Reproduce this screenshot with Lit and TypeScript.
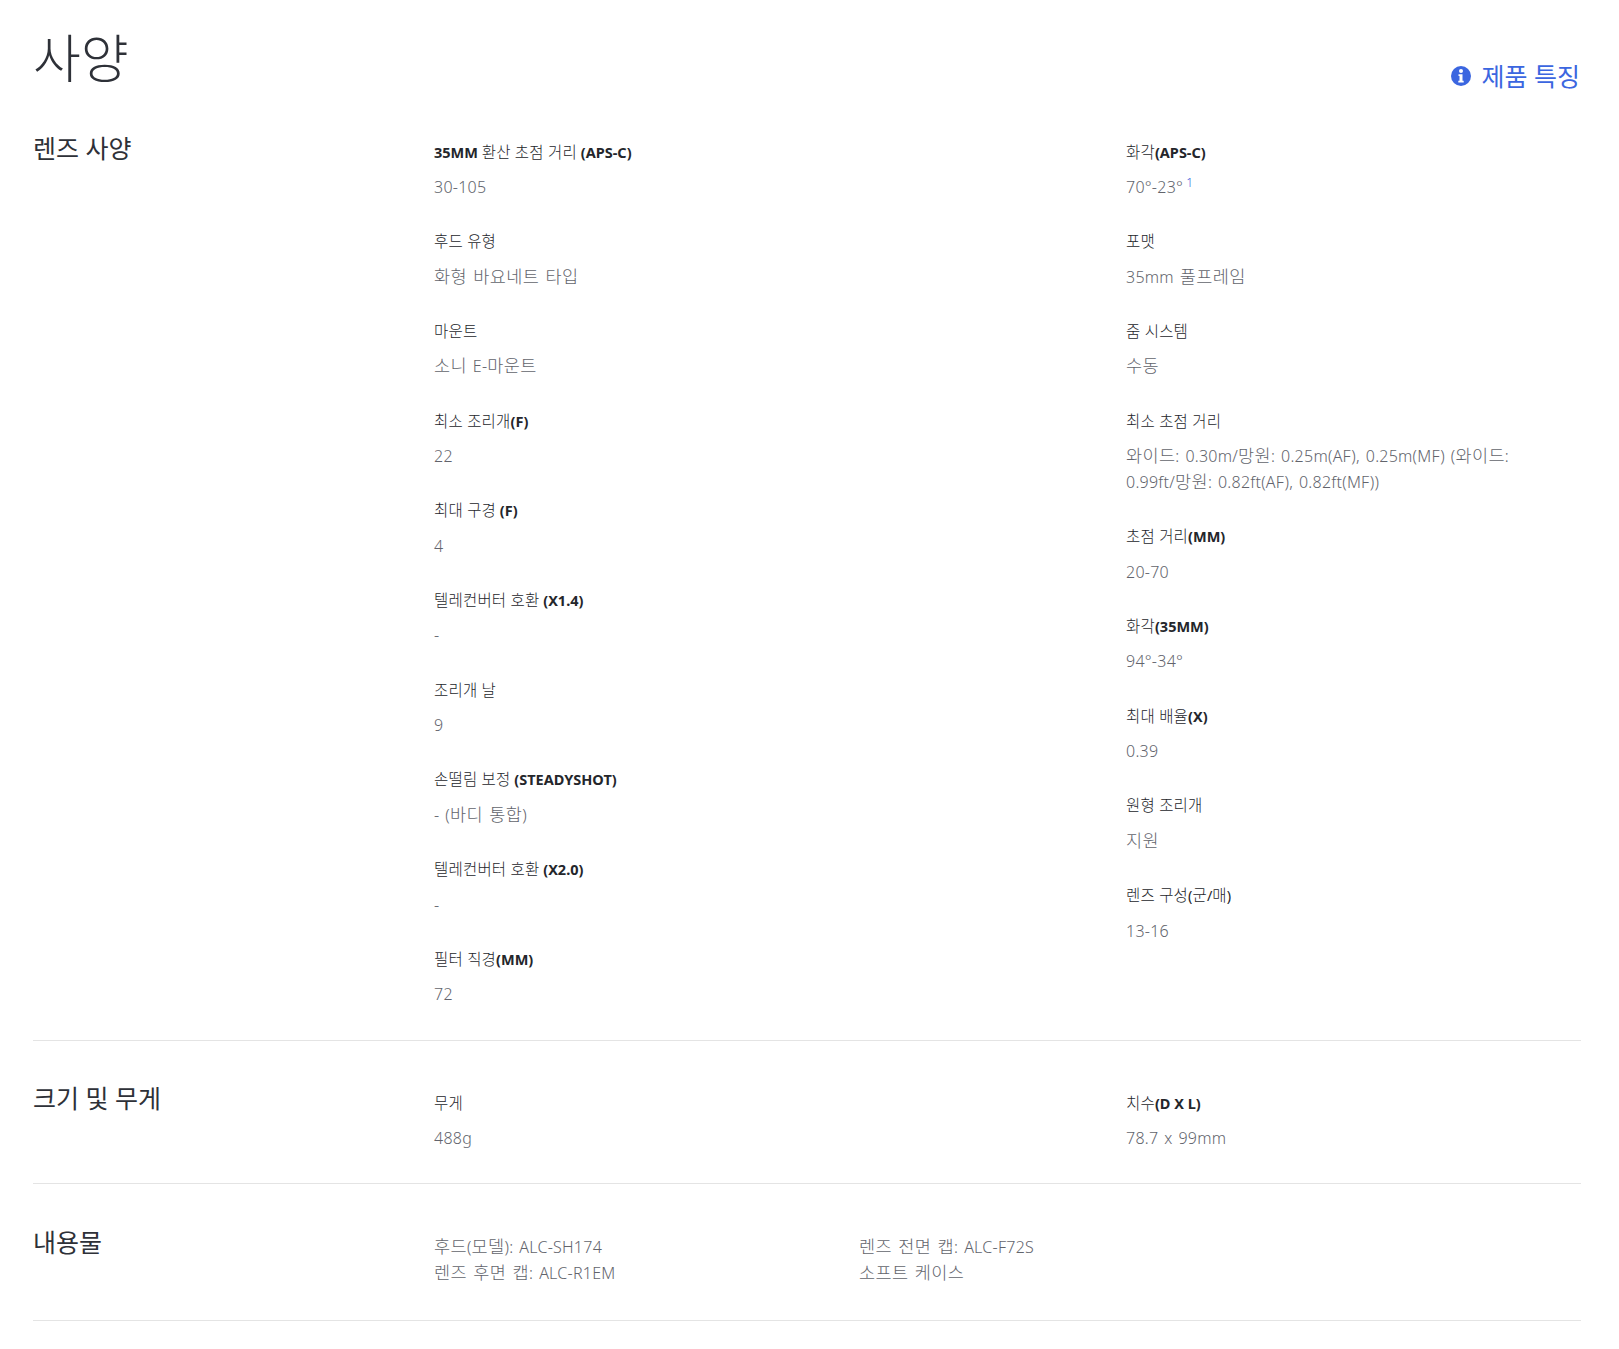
import { LitElement, html, css } from "lit";
import { customElement } from "lit/decorators.js";

type Spec = [string, string];
const left: Spec[] = [
  ["<b>35MM</b> 환산 초점 거리 <b>(APS-C)</b>", "30-105"],
  ["후드 유형", "화형 바요네트 타입"],
  ["마운트", "소니 E-마운트"],
  ["최소 조리개<b>(F)</b>", "22"],
  ["최대 구경 <b>(F)</b>", "4"],
  ["텔레컨버터 호환 <b>(X1.4)</b>", "-"],
  ["조리개 날", "9"],
  ["손떨림 보정 <b>(STEADYSHOT)</b>", "- (바디 통합)"],
  ["텔레컨버터 호환 <b>(X2.0)</b>", "-"],
  ["필터 직경<b>(MM)</b>", "72"],
];
const right: Spec[] = [
  ["화각<b>(APS-C)</b>", "70°-23°"],
  ["포맷", "35mm 풀프레임"],
  ["줌 시스템", "수동"],
  ["최소 초점 거리", "와이드: 0.30m/망원: 0.25m(AF), 0.25m(MF) (와이드: 0.99ft/망원: 0.82ft(AF), 0.82ft(MF))"],
  ["초점 거리<b>(MM)</b>", "20-70"],
  ["화각<b>(35MM)</b>", "94°-34°"],
  ["최대 배율<b>(X)</b>", "0.39"],
  ["원형 조리개", "지원"],
  ["렌즈 구성(군/매)", "13-16"],
];

/* Hangul runs are set larger than the Latin text beside them. */
function ko(s: string) {
  return s
    .split(/([\uAC00-\uD7A3]+(?: [\uAC00-\uD7A3]+)*)/)
    .filter(Boolean)
    .map((p) => (/[\uAC00-\uD7A3]/.test(p) ? html`<span class="k">${p}</span>` : p));
}

function label(s: string) {
  const parts = s.split(/(<b>.*?<\/b>)/).filter(Boolean);
  return parts.map((p) => (p.startsWith("<b>") ? html`<b>${p.slice(3, -4)}</b>` : ko(p)));
}

@customElement("app-root")
export class AppRoot extends LitElement {
  static styles = css`
    :host {
      display: block;
      background: #fff;
      font-family: "Noto Sans", "Noto Sans CJK KR", sans-serif;
      color: #2e3138;
      word-break: keep-all;
    }
    .page { padding: 0 38px 0 33px; }
    .k { line-height: 1; }
    .head {
      display: flex;
      justify-content: space-between;
      align-items: flex-end;
      height: 115px;
      box-sizing: border-box;
    }
    h1 {
      margin: 0;
      font-size: 52px;
      font-weight: 300;
      line-height: 64px;
      padding-bottom: 25px;
      color: #2e3138;
    }
    .feat {
      display: flex;
      align-items: center;
      gap: 10px;
      color: #3b66e0;
      font-size: 25px;
      line-height: 30px;
      padding-bottom: 24px;
      margin-right: 1px;
    }
    .feat svg { width: 20px; height: 20px; display: block; }
    .row {
      display: grid;
      grid-template-columns: 401px 692px 1fr;
      border-bottom: 1px solid #e4e4e4;
      box-sizing: border-box;
    }
    .row.specs { padding-top: 17px; height: 926px; }
    .row.small { padding-top: 41px; height: 143px; }
    .row.box { padding-top: 42px; height: 137px; }
    h2 {
      margin: 0;
      font-size: 25px;
      font-weight: 400;
      line-height: 32px;
      color: #2e3138;
    }
    .col { padding-top: 4px; }
    .small .col { padding-top: 5px; }
    .item { padding-top: 4.5px; margin-bottom: 25.7px; }
    .name {
      font-size: 14.5px;
      line-height: 22px;
      color: #24262b;
      margin-bottom: 11.5px;
    }
    .name .k { font-size: 15.5px; font-weight: 300; letter-spacing: 0.2px; }
    .name b { font-weight: 700; }
    .val, .contents {
      font-size: 16px;
      line-height: 26px;
      color: #62646c;
      font-weight: 300;
      letter-spacing: 0.25px;
      word-spacing: 1.5px;
    }
    .val { max-width: 430px; }
    .val .k, .contents .k { font-size: 17.5px; letter-spacing: 0.35px; }
    sup {
      color: #3b66e0;
      font-size: 12px;
      line-height: 0;
      margin-left: 3px;
      vertical-align: 6px;
    }
    .contents {
      grid-column: 2 / 4;
      display: grid;
      grid-template-columns: 425px 1fr;
      grid-template-rows: 26px 26px;
      padding-top: 8px;
    }
  `;

  private items(list: Spec[]) {
    return html`<div class="col">
      ${list.map(
        ([n, v]) => html`<div class="item">
          <div class="name">${label(n)}</div>
          <div class="val">${ko(v)}${v === "70°-23°" ? html`<sup>1</sup>` : ""}</div>
        </div>`
      )}
    </div>`;
  }

  render() {
    return html`<div class="page">
      <div class="head">
        <h1>${ko("사양")}</h1>
        <div class="feat">
          <svg viewBox="0 0 20 20" aria-hidden="true">
            <circle cx="10" cy="10" r="10" fill="#3b66e0"></circle>
            <circle cx="10" cy="5" r="2" fill="#fff"></circle>
            <path d="M7.5 8.2h4v6.6h1.2v1.8H7.3v-1.8h1.2v-4.8H7.5z" fill="#fff"></path>
          </svg>
          <span>${ko("제품 특징")}</span>
        </div>
      </div>
      <div class="row specs">
        <h2>${ko("렌즈 사양")}</h2>
        ${this.items(left)} ${this.items(right)}
      </div>
      <div class="row small">
        <h2>${ko("크기 및 무게")}</h2>
        ${this.items([["무게", "488g"]])}
        ${this.items([["치수<b>(D X L)</b>", "78.7 x 99mm"]])}
      </div>
      <div class="row box">
        <h2>${ko("내용물")}</h2>
        <div class="contents">
          <div>${ko("후드(모델): ALC-SH174")}</div>
          <div>${ko("렌즈 전면 캡: ALC-F72S")}</div>
          <div>${ko("렌즈 후면 캡: ALC-R1EM")}</div>
          <div>${ko("소프트 케이스")}</div>
        </div>
      </div>
    </div>`;
  }
}
